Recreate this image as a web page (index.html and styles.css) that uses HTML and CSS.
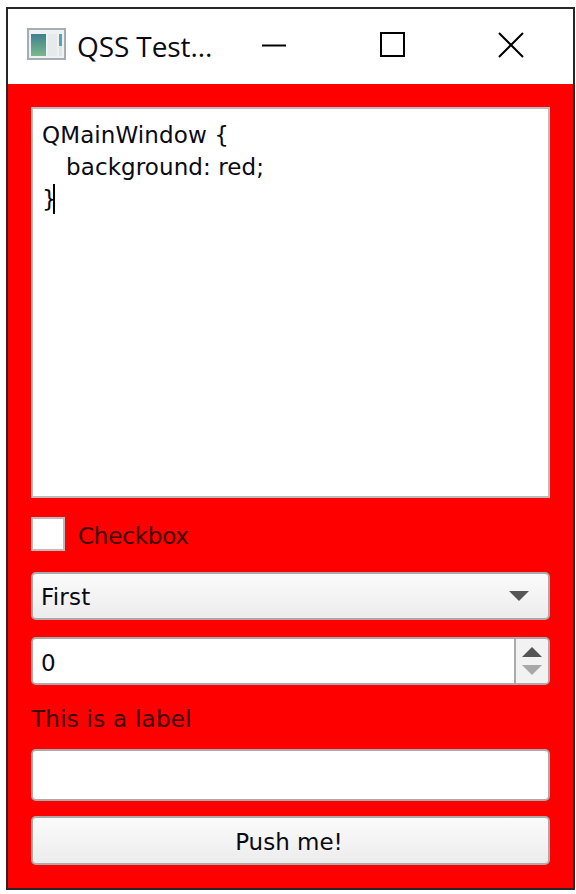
FILE: index.html
```html
<!DOCTYPE html>
<html lang="en">
<head>
<meta charset="utf-8">
<title>QSS Test</title>
<link rel="stylesheet" href="styles.css">
</head>
<body>
<div class="window">
  <header class="titlebar">
    <svg class="app-icon" width="40" height="34" viewBox="0 0 40 34">
      <defs>
        <linearGradient id="g" x1="0" y1="0" x2="0" y2="1">
          <stop offset="0" stop-color="#3f7f8f"/><stop offset="1" stop-color="#79b98a"/>
        </linearGradient>
      </defs>
      <rect x="1" y="1" width="37" height="30" fill="#eef1f3" stroke="#a5adb3" stroke-width="2"/>
      <rect x="4" y="6" width="15" height="22" fill="url(#g)"/>
      <rect x="21" y="6" width="9" height="22" fill="#e6eaea"/>
      <rect x="32" y="6" width="3" height="12" fill="#5f9faf"/>
      <rect x="32" y="18" width="3" height="10" fill="#dce8df"/>
    </svg>
    <span class="title">QSS Test...</span>
    <div class="controls">
      <svg class="ctl" width="26" height="26" viewBox="0 0 26 26"><path d="M2 13.5H26" stroke="#000" stroke-width="2" fill="none"/></svg>
      <svg class="ctl" width="26" height="26" viewBox="0 0 26 26"><rect x="2" y="1" width="23" height="23" stroke="#000" stroke-width="2" fill="none"/></svg>
      <svg class="ctl" width="26" height="26" viewBox="0 0 26 26"><path d="M1 1L25 25M25 1L1 25" stroke="#000" stroke-width="2" fill="none"/></svg>
    </div>
  </header>
  <main class="central">
    <div class="editor"><div>QMainWindow {</div><div class="indent">background: red;</div><div>}<span class="caret"></span></div></div>
    <label class="check"><span class="box"></span><span class="dark check-text">Checkbox</span></label>
    <div class="combo"><span class="combo-text">First</span><svg width="20" height="12" viewBox="0 0 20 12"><path d="M0 1H20L10 11Z" fill="#555"/></svg></div>
    <div class="spin"><span class="spin-val">0</span><div class="spin-btns">
      <svg width="20" height="12" viewBox="0 0 20 12"><path d="M0 11H20L10 1Z" fill="#555"/></svg>
      <svg width="20" height="12" viewBox="0 0 20 12"><path d="M0 1H20L10 11Z" fill="#a8a8a8"/></svg>
    </div></div>
    <div class="label dark">This is a label</div>
    <div class="line"></div>
    <div class="button"><span class="button-text">Push me!</span></div>
  </main>
</div>
</body>
</html>
```
FILE: styles.css
```css
html, body { margin: 0; background: #fff; }
body { width: 576px; height: 894px; overflow: hidden; font-family: "DejaVu Sans", "Noto Sans", sans-serif; font-size: 23px; color: #0a0a14; }
.window { margin: 7px 1px 0 6px; height: 883px; border: 2px solid #262626; box-sizing: border-box; display: flex; flex-direction: column; }
.titlebar { height: 75px; flex: none; background: #fff; display: flex; align-items: center; box-sizing: border-box; padding-left: 19px; }
.app-icon { flex: none; margin-top: -3px; }
.title { font-family: "Open Sans", sans-serif; font-size: 28px; margin-left: 10px; margin-top: -2px; color: #0a0a14; white-space: nowrap; letter-spacing: -0.1px; }
.controls { margin-left: auto; display: flex; gap: 93px; padding-right: 49px; margin-top: -4px; }
.central { flex: 1; background: #f00; padding: 23px 23px 0; display: flex; flex-direction: column; }
.editor { height: 391px; background: #fff; border: 2px solid #bbb; box-sizing: border-box; padding: 10px 9px; line-height: 32px; flex: none; letter-spacing: 0.1px; }
.indent { padding-left: 24px; }
.caret { display: inline-block; width: 2px; height: 30px; margin-left: -4px; background: #000; vertical-align: -7px; }
.check { display: flex; align-items: center; gap: 13px; margin-top: 19px; height: 34px; }
.check-text { padding-top: 4px; letter-spacing: -0.2px; }
.box { width: 34px; height: 34px; background: #fff; border: 2px solid #bbb; box-sizing: border-box; }
.dark { color: #3a0000; }
.combo, .button { background: linear-gradient(#fbfbfb, #ececec); border: 2px solid #aaa; border-radius: 5px; box-sizing: border-box; }
.combo { margin-top: 21px; height: 48px; display: flex; align-items: center; justify-content: space-between; padding: 0 19px 0 8px; }
.combo-text { padding-top: 2px; letter-spacing: 0.2px; }
.spin { margin-top: 17px; height: 48px; background: #fff; border: 2px solid #aaa; border-radius: 5px; box-sizing: border-box; display: flex; }
.spin-val { flex: 1; padding-left: 8px; line-height: 48px; }
.spin-btns { width: 34px; box-sizing: border-box; background: #f2f2f2; border-left: 2px solid #aaa; display: flex; flex-direction: column; align-items: center; justify-content: center; gap: 6px; border-radius: 0 4px 4px 0; }
.label { margin-top: 17px; height: 34px; line-height: 34px; margin-bottom: 13px; letter-spacing: 0.25px; }
.line { height: 52px; background: #fff; border: 2px solid #aaa; border-radius: 5px; box-sizing: border-box; }
.button { margin-top: 15px; height: 49px; text-align: center; line-height: 49px; }
.button-text { margin-left: -3px; }
```
